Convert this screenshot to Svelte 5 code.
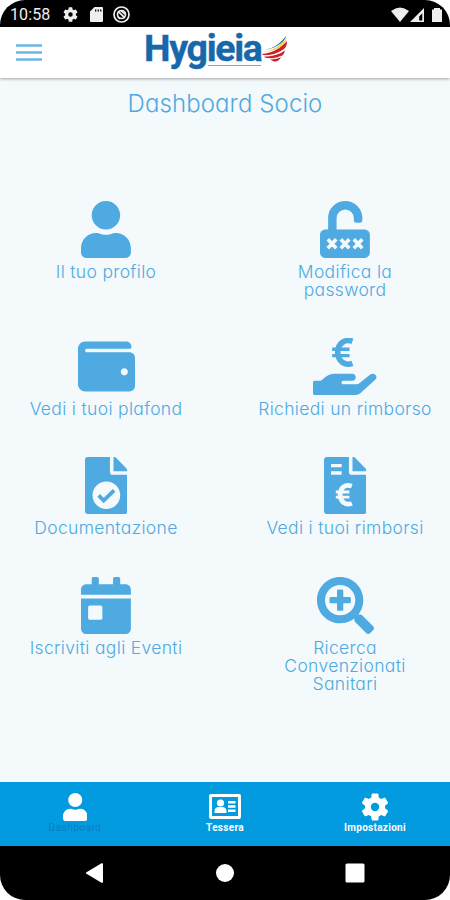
<script>
    const tiles = [
        { icon: "user", lines: ["Il tuo profilo"] },
        { icon: "unlock", lines: ["Modifica la", "password"] },
        { icon: "wallet", lines: ["Vedi i tuoi plafond"] },
        { icon: "hand", lines: ["Richiedi un rimborso"] },
        { icon: "document", lines: ["Documentazione"] },
        { icon: "invoice", lines: ["Vedi i tuoi rimborsi"] },
        { icon: "calendar", lines: ["Iscriviti agli Eventi"] },
        { icon: "search", lines: ["Ricerca", "Convenzionati", "Sanitari"] },
    ];

    const widths = { user: 448, unlock: 448, wallet: 512, hand: 576, document: 384, invoice: 384, calendar: 448, search: 512 };

    const userPath = "M224 256c70.7 0 128-57.3 128-128S294.7 0 224 0 96 57.3 96 128s57.3 128 128 128zm89.6 32h-16.7c-22.2 10.2-46.9 16-72.9 16s-50.6-5.8-72.9-16h-16.7C60.2 288 0 348.2 0 422.4V464c0 26.5 21.5 48 48 48h352c26.5 0 48-21.5 48-48v-41.6c0-74.2-60.2-134.4-134.4-134.4z";
    const gearPath = "M19.14 12.94c.04-.3.06-.61.06-.94 0-.32-.02-.64-.07-.94l2.03-1.58a.49.49 0 0 0 .12-.61l-1.92-3.32a.49.49 0 0 0-.59-.22l-2.39.96a7.03 7.03 0 0 0-1.62-.94l-.36-2.54a.48.48 0 0 0-.48-.41h-3.84a.47.47 0 0 0-.47.41l-.36 2.54c-.59.24-1.13.57-1.62.94l-2.39-.96a.48.48 0 0 0-.59.22L2.74 8.87a.47.47 0 0 0 .12.61l2.03 1.58c-.05.3-.09.63-.09.94s.02.64.07.94l-2.03 1.58a.49.49 0 0 0-.12.61l1.92 3.32c.12.22.37.29.59.22l2.39-.96c.5.38 1.03.7 1.62.94l.36 2.54c.05.24.24.41.48.41h3.84c.24 0 .44-.17.47-.41l.36-2.54a6.9 6.9 0 0 0 1.62-.94l2.39.96c.22.08.47 0 .59-.22l1.92-3.32a.47.47 0 0 0-.12-.61l-2.01-1.58zM12 15a3 3 0 1 1 0-6 3 3 0 0 1 0 6z";
    const pagePath = "M224 136V0H24C10.7 0 0 10.7 0 24v464c0 13.3 10.7 24 24 24h336c13.3 0 24-10.7 24-24V160H248c-13.2 0-24-10.8-24-24zM256 0v128h128v-6c0-5-3-10-7-14L279 7c-4-4-10-7-17-7z";
</script>

<div class="phone">
    <div class="status">
        <span class="clock">10:58</span>
        <svg class="st-gear" viewBox="2 2 20 20"><path d={gearPath} /></svg>
        <svg class="st-card" viewBox="0 0 13 15">
            <path fill-rule="evenodd" d="M4.5 0H12a1 1 0 0 1 1 1v13a1 1 0 0 1-1 1H1a1 1 0 0 1-1-1V4.5zM5 2.500v2h1.300v-2zm2.600 0v2h1.300v-2zm2.500 0v2h1.300v-2z" />
        </svg>
        <svg class="st-ring" viewBox="0 0 17 17">
            <circle cx="8.5" cy="8.5" r="7.5" />
            <circle cx="8.5" cy="8.5" r="4" />
            <path d="M5.2 5.4l6.6 6.4M5 10.8l2.2 2M8 4.6l4 3.4" />
        </svg>
        <svg class="st-right" viewBox="0 0 52 16">
            <path d="M0 4Q9 -3 18 4L9 15z" />
            <path fill-rule="evenodd" d="M33 1v14H19zM31.3 6.3v7.2h-3.1V9.4z" />
            <path d="M43 1h6v1.600h2V15H41V2.600h2z" />
        </svg>
    </div>

    <header>
        <svg class="burger" viewBox="0 0 26 17">
            <path d="M0 1.5h26M0 8.5h26M0 15.5h26" />
        </svg>
        <div class="logo">
            <span class="brand">Hygieia</span>
            <i class="strap"></i>
            <svg class="wing" viewBox="0 0 26 26">
                <path fill="#27609e" d="M3 14C12 12 19 7 24 0c0 4-8 12-21 14z" />
                <path fill="#f0d550" d="M2 16C12 14 19 9 24.500 2c0 6-8 13-22.500 14z" />
                <path fill="#c9202c" d="M0 18C11 17 19 12 25 5c0 4-1 6-3 8-6 4-13 7-21 6z" />
                <path fill="#c9202c" d="M2 20.500c8 0 15-2 21-6-1 4-3 6-6 6.500-5 2-10 2-14 .5z" />
                <path fill="#c9202c" d="M8 23.500c5 0 9-1 11-2.500-1 3-4 5-7 4.500z" />
                <path fill="none" stroke="#fff" stroke-width=".7" d="M1 19.800c8 .3 16-2 22-6.300M5 22.700c5 .3 10-.5 14-2.500" />
            </svg>
        </div>
    </header>

    <main>
        <h1>Dashboard Socio</h1>
        <div class="tiles">
            {#each tiles as tile}
                <div class="tile">
                    <svg viewBox="0 0 {widths[tile.icon]} 512">
                        {#if tile.icon === "user"}
                            <path d={userPath} />
                        {:else if tile.icon === "unlock"}
                            <path d="M48 256h352c26 0 48 21 48 48v160c0 27-22 48-48 48H48c-27 0-48-21-48-48V304c0-27 21-48 48-48z" />
                            <path class="line" stroke-width="76" d="M111 270V154a115 115 0 0 1 231 0" />
                            <path d="M304 150h76v24c0 14-8 22-22 22h-32c-14 0-22-8-22-22z" />
                            <path class="cut" stroke-width="32" d="M70 344l76 80m0-80l-76 80M187 344l76 80m0-80l-76 80M304 344l76 80m0-80l-76 80" />
                        {:else if tile.icon === "wallet"}
                            <path d="M461.200 128H80c-8.840 0-16-7.160-16-16s7.160-16 16-16h384c8.840 0 16-7.160 16-16 0-26.510-21.490-48-48-48H64C28.650 32 0 60.650 0 96v320c0 35.350 28.650 64 64 64h397.200c28.020 0 50.800-21.530 50.800-48V176c0-26.470-22.780-48-50.800-48zM416 336c-17.670 0-32-14.330-32-32s14.330-32 32-32 32 14.330 32 32-14.330 32-32 32z" />
                        {:else if tile.icon === "hand"}
                            <path class="line" stroke-width="50" d="M354 30C290 6 222 45 222 129S290 252 354 228" />
                            <path class="line" stroke-width="30" d="M172 101h156M172 158h156" />
                            <path d="M16 384h55l46-38c21-17 47-26 75-26h160c20 0 35 16 32 36-3 17-18 28-34 28h-78c-9 0-16 7-16 16s7 16 16 16h118c10 0 18-3 26-9l93-74c13-11 32-18 48-6 17 13 17 36 1 49L430 492c-16 13-31 20-50 20H16c-9 0-16-7-16-16v-96c0-9 7-16 16-16z" />
                        {:else if tile.icon === "document"}
                            <path d={pagePath} />
                            <circle class="hole" cx="192" cy="344" r="124" />
                            <path class="line" stroke-width="34" d="M123 345l45 46 93-92" />
                        {:else if tile.icon === "invoice"}
                            <path d={pagePath} />
                            <path class="cut" stroke-width="30" d="M63 78h96M63 144h96" />
                            <path class="cut" stroke-width="42" d="M250 262C190 240 145 276 145 339S194 440 250 416" />
                            <path class="cut" stroke-width="26" d="M106 315h122M106 360h122" />
                        {:else if tile.icon === "calendar"}
                            <path d="M0 464c0 26.500 21.500 48 48 48h352c26.500 0 48-21.500 48-48V192H0v272zm64-192c0-8.800 7.200-16 16-16h96c8.800 0 16 7.200 16 16v96c0 8.800-7.200 16-16 16H80c-8.800 0-16-7.200-16-16v-96zM400 64h-48V16c0-8.800-7.200-16-16-16h-32c-8.800 0-16 7.200-16 16v48H160V16c0-8.800-7.200-16-16-16h-32c-8.800 0-16 7.200-16 16v48H48C21.500 64 0 85.500 0 112v48h448v-48c0-26.500-21.500-48-48-48z" />
                        {:else}
                            <path d="M304 192v32c0 6.600-5.400 12-12 12h-56v56c0 6.600-5.400 12-12 12h-32c-6.600 0-12-5.400-12-12v-56h-56c-6.600 0-12-5.400-12-12v-32c0-6.600 5.400-12 12-12h56v-56c0-6.600 5.400-12 12-12h32c6.600 0 12 5.400 12 12v56h56c6.600 0 12 5.400 12 12zm201 284.700L476.700 505c-9.400 9.400-24.600 9.400-33.900 0L343 405.300c-4.500-4.500-7-10.600-7-17V372c-35.300 27.600-79.700 44-128 44C93.100 416 0 322.900 0 208S93.100 0 208 0s208 93.100 208 208c0 48.300-16.400 92.700-44 128h16.300c6.400 0 12.500 2.500 17 7l99.700 99.700c9.300 9.400 9.300 24.600 0 34zM344 208c0-75.200-60.800-136-136-136S72 132.800 72 208s60.800 136 136 136 136-60.800 136-136z" />
                        {/if}
                    </svg>
                    <div class="label">
                        {#each tile.lines as line}
                            <span>{line}</span>
                        {/each}
                    </div>
                </div>
            {/each}
        </div>
    </main>

    <nav class="tabs">
        <div class="tab active">
            <svg viewBox="0 0 448 512"><path d={userPath} /></svg>
            <span>Dashboard</span>
        </div>
        <div class="tab">
            <svg viewBox="0 0 32 28">
                <path fill-rule="evenodd" d="M2 1h28a2 2 0 0 1 2 2v21a2 2 0 0 1-2 2H2a2 2 0 0 1-2-2V3a2 2 0 0 1 2-2zm1 3v19h26V4z" />
                <circle cx="11.500" cy="10" r="3.600" />
                <path d="M5.500 20v-2c0-2.600 2-4 4-4h4c2 0 4 1.400 4 4v2zM19 8h7.500v2.600H19zm0 4.200h7.500v2.600H19zm0 4.200h7.500V19H19z" />
            </svg>
            <span>Tessera</span>
        </div>
        <div class="tab">
            <svg viewBox="2 2 20 20"><path d={gearPath} /></svg>
            <span>Impostazioni</span>
        </div>
    </nav>

    <div class="system">
        <svg viewBox="0 0 20 20"><path d="M1.500 9.200L16.500.3c.8-.4 1.500 0 1.500.8v17.800c0 .8-.7 1.200-1.500.8L1.500 10.800c-.7-.4-.7-1.200 0-1.600z" /></svg>
        <svg viewBox="0 0 20 20"><circle cx="10" cy="10" r="9" /></svg>
        <svg viewBox="0 0 20 20"><rect x=".5" y=".5" width="19" height="19" rx="1.500" /></svg>
    </div>
</div>

<style>
    :global(body) {
        background: #fff;
    }

    .phone {
        width: 450px;
        height: 900px;
        display: flex;
        flex-direction: column;
        border-radius: 25px;
        overflow: hidden;
        background: #f4f9fc;
        font-family: Inter, "Open Sans", sans-serif;
    }

    svg {
        display: block;
        flex-shrink: 0;
    }

    .status {
        height: 27px;
        box-sizing: border-box;
        padding: 2px 7px 0 10px;
        display: flex;
        align-items: center;
        background: #000;
        color: #eee;
        fill: #eee;
    }

    .clock {
        width: 53px;
        font: 400 16px/20px Roboto, sans-serif;
        letter-spacing: 0.1px;
    }

    .st-gear {
        width: 15px;
        height: 15px;
    }

    .st-card {
        width: 13px;
        height: 15px;
        margin-left: 12px;
    }

    .st-ring {
        width: 17px;
        height: 17px;
        margin-left: 10px;
        fill: none;
        stroke: #eee;
        stroke-width: 1.7;
    }

    .st-right {
        width: 52px;
        height: 16px;
        margin-left: auto;
    }

    header {
        position: relative;
        z-index: 1;
        height: 51px;
        display: flex;
        align-items: center;
        background: #fff;
        box-shadow: 0 1px 3px rgba(0, 0, 0, 0.35);
    }

    .burger {
        width: 26px;
        height: 17px;
        margin-left: 16px;
        fill: none;
        stroke: #6cb7e2;
        stroke-width: 2.3;
    }

    .logo {
        position: relative;
        display: flex;
        align-items: flex-start;
        margin-left: 102px;
        height: 46px;
    }

    .brand {
        width: 118px;
        font: 700 37.500px/36px Roboto, sans-serif;
        letter-spacing: -1.300px;
        color: #1768ab;
        -webkit-text-stroke: 0.4px #1768ab;
        white-space: nowrap;
    }

    .strap {
        position: absolute;
        left: 64px;
        top: 35px;
        width: 53px;
        height: 1px;
        background: #7ba5ca;
    }

    .wing {
        width: 26px;
        height: 26px;
        margin-top: 6px;
    }

    main {
        flex: 1;
        color: #4eaae0;
    }

    h1 {
        margin: 11px 0 0;
        font-size: 24px;
        line-height: 30px;
        font-weight: 300;
        letter-spacing: 0.1px;
        text-align: center;
        font-feature-settings: "cv11";
    }

    .tiles {
        display: grid;
        grid-template-columns: 212px 210px;
        justify-content: space-between;
        row-gap: 39.200px;
        margin-top: 82px;
    }

    .tile {
        display: flex;
        flex-direction: column;
        align-items: center;
    }

    .tile svg {
        height: 57px;
        fill: #4eaae0;
    }

    .tile .line {
        fill: none;
        stroke: #4eaae0;
    }

    .tile .cut {
        fill: none;
        stroke: #f4f9fc;
    }

    .tile .hole {
        fill: #f4f9fc;
    }

    .label {
        display: flex;
        flex-direction: column;
        align-items: center;
        margin-top: 5px;
        font-size: 17.500px;
        line-height: 18px;
        font-weight: 300;
        letter-spacing: 0.330px;
        white-space: nowrap;
        font-feature-settings: "cv11";
    }

    .tabs {
        height: 64px;
        display: grid;
        grid-template-columns: repeat(3, 1fr);
        background: #029bdf;
        fill: #fff;
        color: #fff;
    }

    .tab {
        display: flex;
        flex-direction: column;
        align-items: center;
        padding-top: 11px;
        font: 700 10px/13px Roboto, sans-serif;
        letter-spacing: 0.300px;
    }

    .tab svg {
        height: 28px;
    }

    .active {
        color: #087fc4;
        font-weight: 400;
        letter-spacing: 0.500px;
    }

    .system {
        height: 54px;
        display: flex;
        justify-content: space-between;
        align-items: center;
        box-sizing: border-box;
        padding: 0 85px;
        background: #000;
        fill: #fff;
    }

    .system svg {
        width: 20px;
        height: 20px;
    }
</style>
